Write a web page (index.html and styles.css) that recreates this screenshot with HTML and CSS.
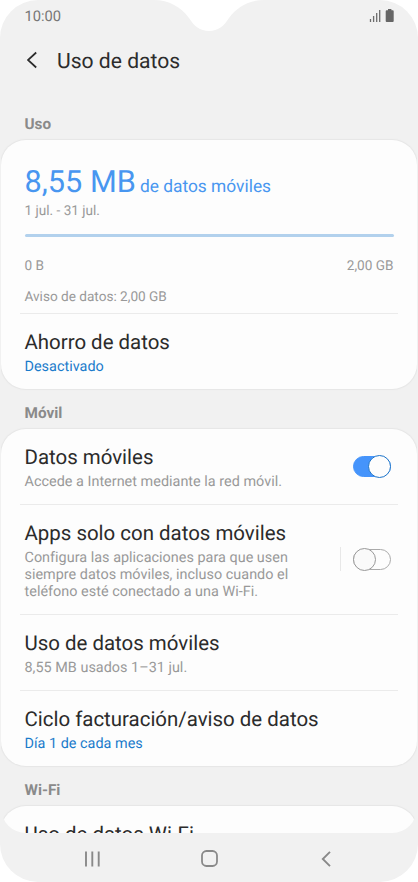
FILE: index.html
```html
<!DOCTYPE html>
<html lang="es">
<head>
<meta charset="utf-8">
<title>Uso de datos</title>
<link rel="stylesheet" href="styles.css">
</head>
<body>
<div class="phone">
  <svg class="notch" width="110" height="31" viewBox="0 0 110 31" aria-hidden="true"><path d="M0 0C15 0 27 7 35 18C40 26 46 31 55 31S70 26 75 18C83 7 95 0 110 0Z" fill="#fff"/></svg>
  <header class="status">
    <span>10:00</span>
    <svg width="26" height="15" viewBox="0 0 26 15" aria-hidden="true">
      <path d="M1.5 12V15M4.600 9V15M7.700 6V15M10.700 3V15" stroke="#6c6c6c" stroke-width="1.300" fill="none"/>
      <path d="M19 2h3.400v1.300h1.300q1 0 1 1v9.700q0 1-1 1h-6q-1 0-1-1V4.300q0-1 1-1h1.300Z" fill="#666"/>
    </svg>
  </header>
  <div class="titlebar">
    <svg width="12" height="18" viewBox="0 0 12 18" aria-hidden="true"><path d="M10.200 1.500L2 9l8.200 7.500" fill="none" stroke="#2c2c2c" stroke-width="1.700"/></svg>
    <h1>Uso de datos</h1>
  </div>
  <main class="content">
    <h2 class="section">Uso</h2>
    <section class="card">
      <div class="usage">
        <p class="amount">8,55 MB <span>de datos móviles</span></p>
        <p class="period">1 jul. - 31 jul.</p>
        <div class="bar"></div>
        <div class="scale"><span>0 B</span><span>2,00 GB</span></div>
        <p class="warning">Aviso de datos: 2,00 GB</p>
      </div>
      <div class="row"><div><h3>Ahorro de datos</h3><p class="link">Desactivado</p></div></div>
    </section>
    <h2 class="section">Móvil</h2>
    <section class="card">
      <div class="row first"><div><h3>Datos móviles</h3><p>Accede a Internet mediante la red móvil.</p></div><span class="switch on"></span></div>
      <div class="row tall"><div><h3>Apps solo con datos móviles</h3><p>Configura las aplicaciones para que usen<br>siempre datos móviles, incluso cuando el<br>teléfono esté conectado a una Wi-Fi.</p></div><div class="control"><span class="switch"></span></div></div>
      <div class="row"><div><h3>Uso de datos móviles</h3><p>8,55 MB usados 1–31 jul.</p></div></div>
      <div class="row"><div><h3>Ciclo facturación/aviso de datos</h3><p class="link">Día 1 de cada mes</p></div></div>
    </section>
    <h2 class="section">Wi-Fi</h2>
    <section class="card">
      <div class="row first"><div><h3>Uso de datos Wi-Fi</h3></div></div>
    </section>
  </main>
  <nav class="nav">
    <svg width="16" height="16" viewBox="0 0 16 16" aria-hidden="true"><path d="M2 .5v15M8.300 .5v15M14.700 .5v15" stroke="#898989" stroke-width="1.900"/></svg>
    <svg width="17" height="17" viewBox="0 0 17 17" aria-hidden="true"><rect x="1" y="1" width="15" height="15" rx="4.500" fill="none" stroke="#898989" stroke-width="1.800"/></svg>
    <svg width="10" height="16" viewBox="0 0 10 16" aria-hidden="true"><path d="M9 .8L1.800 8L9 15.200" fill="none" stroke="#898989" stroke-width="1.900"/></svg>
  </nav>
</div>
</body>
</html>
```

FILE: styles.css
```css
*, *::before, *::after { box-sizing: border-box; }
body { margin: 0; background: #fff; font-family: Roboto, sans-serif; text-rendering: geometricPrecision; }
h1, h2, h3, p { margin: 0; font-weight: 400; white-space: nowrap; }
svg { display: block; flex: none; }

.phone {
  position: relative;
  display: flex;
  flex-direction: column;
  width: 418px;
  height: 882px;
  overflow: hidden;
  background: #f1f1f1;
  border-radius: 38px;
}
.notch { position: absolute; top: 0; left: 154px; }

.status {
  display: flex;
  justify-content: space-between;
  height: 34px;
  padding: 7px 23px 0 24.500px;
  font-size: 14.700px;
  line-height: 18px;
  color: #777;
}
.titlebar {
  display: flex;
  align-items: center;
  gap: 19px;
  height: 52px;
  padding-left: 26px;
  color: #2c2c2c;
}
.titlebar h1 { font-size: 21.100px; line-height: 28px; padding-top: 3px; }

.content {
  flex: none;
  height: 747px;
  margin: 0 1px;
  padding-top: 26px;
  overflow: hidden;
  border-radius: 0 0 25px 25px;
}
.section {
  height: 40px;
  padding: 14px 0 0 23.500px;
  font-size: 15.300px;
  font-weight: 700;
  line-height: 20px;
  color: #8a8a8a;
}
.section:first-child { height: 28px; padding-top: 2px; }
.card {
  background: #fdfdfd;
  border-radius: 25px;
  box-shadow: 0 0 1px 1px #e6e6e6;
}
.usage { height: 173px; padding: 25px 23.500px 0 23.500px; color: #999; font-size: 13.600px; line-height: 18px; }
.amount { height: 36px; font-size: 30.700px; line-height: 36px; color: #4896f0; }
.amount span { font-size: 17.350px; margin-left: -3.500px; }
.period { margin-top: 1px; }
.bar { height: 3px; margin-top: 14px; border-radius: 2px; background: #b2d1ed; }
.scale { display: flex; justify-content: space-between; margin-top: 20px; }
.warning { margin-top: 13px; }

.row {
  position: relative;
  display: flex;
  align-items: flex-start;
  justify-content: space-between;
  height: 76px;
  padding: 16px 26px 0 23.500px;
}
.row + .row::before, .usage + .row::before {
  content: "";
  position: absolute;
  top: 0;
  left: 19px;
  right: 19px;
  height: 1px;
  background: #ebebeb;
}
.row h3 { font-size: 20.450px; line-height: 26px; color: #2b2b2b; }
.row p { margin-top: 3px; font-size: 14.400px; line-height: 17px; letter-spacing: .02px; color: #999; }
.row .link { color: #1a7bcb; }
.first { height: 75px; padding-top: 15px; }
.tall { height: 110px; }

.switch {
  position: relative;
  flex: none;
  width: 38px;
  height: 21px;
  margin-top: 12px;
  border: 1px solid #aaa;
  border-radius: 11px;
}
.switch::after {
  content: "";
  position: absolute;
  top: -2px;
  left: -1px;
  width: 23px;
  height: 23px;
  border: 1px solid #999;
  border-radius: 50%;
  background: #fafafa;
}
.switch.on { border-color: #4594fb; background: #4594fb; }
.switch.on::after { left: auto; right: -1px; border-color: #1d74c9; background: #fdfdfd; }
.control { display: flex; align-items: center; height: 24px; margin-top: 27px; padding-left: 12px; border-left: 1px solid #e8e8e8; }
.control .switch { margin-top: 0; }

.nav {
  display: grid;
  grid-template-columns: repeat(3, 117px);
  justify-content: center;
  place-items: center;
  height: 49px;
  padding-top: 2px;
}
```
